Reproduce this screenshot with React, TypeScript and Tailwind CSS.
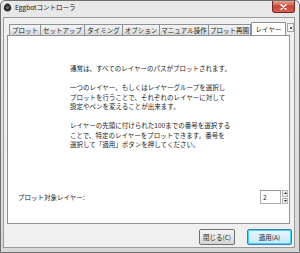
const tabs = [
  { label: 'プロット', w: 'w-[31px]' },
  { label: 'セットアップ', w: 'w-[44px]' },
  { label: 'タイミング', w: 'w-[38px]' },
  { label: 'オプション', w: 'w-[37px]' },
  { label: 'マニュアル操作', w: 'w-[49px]' },
  { label: 'プロット再開', w: 'w-[43px]' },
]

function EggIcon() {
  return (
    <svg width="9" height="9" viewBox="0 0 9 9">
      <path d="M4.5 0.6 C6.6 0.6 8.2 3.2 8.2 5.2 C8.2 7.2 6.6 8.4 4.5 8.4 C2.4 8.4 0.8 7.2 0.8 5.2 C0.8 3.2 2.4 0.6 4.5 0.6 Z" fill="#2b2b2b" />
      <path d="M2.2 4.6 L4.5 2.8 L6.8 4.6 L4.5 6.6 Z" fill="#6a6a6a" />
    </svg>
  )
}

export default function App() {
  return (
    <div className="flex h-[253px] w-[300px] flex-col overflow-hidden rounded-t-[5px] border border-[#6f6f6f] bg-gradient-to-b from-[#e9e9e9] to-[#d8d8d8] font-['Noto_Sans_CJK_JP',sans-serif] text-[#1c1c1c]">
      {/* title bar */}
      <div className="flex h-[16px] flex-shrink-0 items-start">
        <div className="ml-[2px] mt-[2px] flex items-center gap-[3px]">
          <EggIcon />
          <span className="text-[6.5px] leading-[9px] text-[#111]">Eggbotコントローラ</span>
        </div>
        <div className="ml-auto mr-[4px] flex h-[12px] w-[23px] items-center justify-center rounded-b-[3px] border border-t-0 border-[#6e2a22] bg-gradient-to-b from-[#e9a493] via-[#c8473a] to-[#d9604c]">
          <svg width="7" height="6" viewBox="0 0 7 6">
            <path d="M1 0.8 L6 5.2 M6 0.8 L1 5.2" stroke="#fff" strokeWidth="1.5" strokeLinecap="round" />
          </svg>
        </div>
      </div>

      {/* client area */}
      <div className="mb-[4px] ml-[2px] mr-[4px] flex flex-1 flex-col border border-[#9a9a9a] bg-[#f0f0f0]">
        {/* tab strip */}
        <div className="flex h-[17px] flex-shrink-0 items-end overflow-hidden pl-[5px] pt-[4px]">
          {tabs.map((t, i) => (
            <div
              key={t.label}
              className={`${t.w} flex h-[11px] flex-shrink-0 items-center justify-center border-l border-t border-[#8d9099] bg-gradient-to-b from-[#f4f4f4] via-[#e9e9e9] to-[#d6d6d6] text-[6.5px] leading-none text-[#222] ${
                i === tabs.length - 1 ? 'border-r' : ''
              }`}
            >
              {t.label}
            </div>
          ))}
          <div className="relative z-10 mb-[-1px] flex h-[14px] w-[35px] flex-shrink-0 items-center justify-center border-x border-t border-[#8d9099] bg-white pb-[1px] text-[6.5px] leading-none text-[#222]">
            レイヤー
          </div>
          <div className="mb-[3px] ml-[1px] flex h-[9px] w-[7px] flex-shrink-0 items-center justify-center border border-[#a7a7a7] bg-[#f4f4f4]">
            <div className="h-[2px] w-[2px] rounded-full bg-[#222]" />
          </div>
        </div>

        {/* tab panel */}
        <div className="ml-[3px] mr-[4px] flex flex-1 flex-col border border-[#8d9099] bg-white">
          <div className="pl-[62px] pt-[28px] text-[6.5px] leading-[9.5px] text-[#1a1a1a]">
            <p>通常は、すべてのレイヤーのパスがプロットされます。</p>
            <p className="mt-[9.5px]">
              一つのレイヤー、もしくはレイヤーグループを選択し
              <br />
              プロットを行うことで、それぞれのレイヤーに対して
              <br />
              設定やペンを変えることが出来ます。
            </p>
            <p className="mt-[9.5px]">
              レイヤーの先頭に付けられた100までの番号を選択する
              <br />
              ことで、特定のレイヤーをプロットできます。番号を
              <br />
              選択して「適用」ボタンを押してください。
            </p>
          </div>

          <div className="mb-[19px] mt-auto flex items-center pl-[10px] pr-[1px]">
            <span className="text-[6.5px] leading-none text-[#1a1a1a]">プロット対象レイヤー:</span>
            <div className="ml-auto flex h-[14px] items-stretch">
              <div className="flex w-[21px] items-center border border-[#abadb3] border-t-[#8f939c] bg-white pl-[2px] text-[6.5px] leading-none">
                2
              </div>
              <div className="ml-[1px] flex w-[6px] flex-col gap-[1px]">
                <div className="flex flex-1 items-center justify-center border border-[#b5b5b5] bg-[#efefef]">
                  <svg width="3" height="2" viewBox="0 0 3 2">
                    <path d="M0 2 L1.5 0 L3 2 Z" fill="#333" />
                  </svg>
                </div>
                <div className="flex flex-1 items-center justify-center border border-[#b5b5b5] bg-[#efefef]">
                  <svg width="3" height="2" viewBox="0 0 3 2">
                    <path d="M0 0 L1.5 2 L3 0 Z" fill="#333" />
                  </svg>
                </div>
              </div>
            </div>
          </div>
        </div>

        {/* buttons */}
        <div className="flex h-[23px] flex-shrink-0 items-start justify-end gap-[12px] pr-[2px] pt-[5px]">
          <button className="flex h-[16px] w-[36px] items-center justify-center rounded-[2px] border border-[#707070] bg-gradient-to-b from-[#f3f3f3] via-[#e8e8e8] to-[#d3d3d3] text-[6.5px] leading-none text-[#1a1a1a]">
            閉じる(C)
          </button>
          <button className="flex h-[16px] w-[45px] items-center justify-center rounded-[2px] border border-[#3c7fb1] bg-gradient-to-b from-[#eaf6fd] via-[#d9f0fc] to-[#bee6fd] text-[6.5px] leading-none text-[#1a1a1a] shadow-[inset_0_0_0_1px_#48d2f8]">
            適用(A)
          </button>
        </div>
      </div>
    </div>
  )
}
